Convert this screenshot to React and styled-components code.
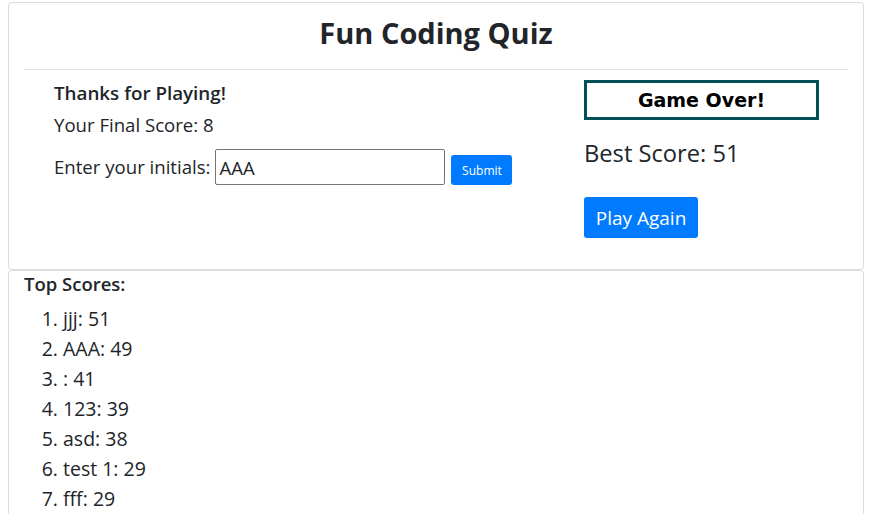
import React, { useState } from 'react'
import styled, { createGlobalStyle } from 'styled-components'

const scores = [
  { name: 'jjj', score: 51 },
  { name: 'AAA', score: 49 },
  { name: '', score: 41 },
  { name: '123', score: 39 },
  { name: 'asd', score: 38 },
  { name: 'test 1', score: 29 },
  { name: 'fff', score: 29 },
]

const App = () => {
  const [initials, setInitials] = useState('AAA')
  return (
    <>
      <GlobalStyle />
      <Page>
        <Card>
          <Title>Fun Coding Quiz</Title>
          <Divider />
          <Row>
            <LeftCol>
              <Thanks>Thanks for Playing!</Thanks>
              <Line>Your Final Score: 8</Line>
              <Form onSubmit={(e) => e.preventDefault()}>
                <Line as='label'>Enter your initials:</Line>
                <Input value={initials} onChange={(e) => setInitials(e.target.value)} />
                <SmallButton type='submit'>Submit</SmallButton>
              </Form>
            </LeftCol>
            <RightCol>
              <GameOver>Game Over!</GameOver>
              <Best>Best Score: 51</Best>
              <BigButton>Play Again</BigButton>
            </RightCol>
          </Row>
        </Card>
        <ScoreCard>
          <ScoreTitle>Top Scores:</ScoreTitle>
          <ScoreList>
            {scores.map((s, i) => (
              <ScoreItem key={i}>{s.name}: {s.score}</ScoreItem>
            ))}
          </ScoreList>
        </ScoreCard>
      </Page>
    </>
  )
}

const GlobalStyle = createGlobalStyle`
  *, *::before, *::after {
    box-sizing: border-box;
  }
  body {
    margin: 0;
    font-family: 'Open Sans', 'Noto Sans', sans-serif;
    color: #212529;
    background: #fff;
    overflow: hidden;
  }
`

const Page = styled.div`
  margin: 2px 16px 0 8px;
`

const Card = styled.div`
  border: 1px solid #dcdcdc;
  border-radius: 4px;
  padding: 0 15px;
  height: 268px;
`

const Title = styled.h1`
  margin: 0;
  padding-top: 12px;
  height: 53px;
  text-align: center;
  font-size: 29px;
  font-weight: 700;
  line-height: 36px;
`

const Divider = styled.hr`
  margin: 13px 0 0;
  border: 0;
  border-top: 1px solid #e2e2e2;
`

const Row = styled.div`
  display: flex;
`

const LeftCol = styled.div`
  width: 560px;
  padding-left: 30px;
  padding-top: 10px;
`

const RightCol = styled.div`
  display: flex;
  flex-direction: column;
  align-items: flex-start;
  padding-top: 10px;
`

const Thanks = styled.div`
  font-size: 18.8px;
  font-weight: 600;
  line-height: 26px;
`

const Line = styled.div`
  font-size: 18.6px;
  line-height: 26px;
  margin-top: 6px;
`

const Form = styled.form`
  display: flex;
  align-items: flex-end;
  margin-top: 11px;
  ${Line} {
    margin: 0 5px 5px 0;
  }
`

const Input = styled.input`
  width: 230px;
  height: 36px;
  border: 1px solid #767676;
  border-radius: 2px;
  padding: 0 3px;
  font-family: inherit;
  font-size: 18.6px;
  color: #212529;
  outline: none;
`

const SmallButton = styled.button`
  margin-left: 6px;
  height: 30px;
  width: 61px;
  padding: 0;
  border: none;
  border-radius: 3px;
  background: #007bff;
  color: #fff;
  font-family: inherit;
  font-size: 12px;
`

const GameOver = styled.div`
  width: 235px;
  height: 40px;
  border: 3px solid #014f57;
  display: flex;
  align-items: center;
  justify-content: center;
  font-family: 'DejaVu Sans', Verdana, sans-serif;
  font-weight: 700;
  font-size: 19px;
  color: #000;
`

const Best = styled.div`
  font-size: 23.7px;
  line-height: 30px;
  margin-top: 18px;
`

const BigButton = styled.button`
  margin-top: 29px;
  height: 41px;
  width: 114px;
  padding: 0;
  border: none;
  border-radius: 3px;
  background: #007bff;
  color: #fff;
  font-family: inherit;
  font-size: 19px;
`

const ScoreCard = styled.div`
  border: 1px solid #dcdcdc;
  border-bottom: none;
  border-radius: 4px 4px 0 0;
  padding: 0 15px;
`

const ScoreTitle = styled.div`
  font-size: 18.5px;
  font-weight: 600;
  line-height: 26px;
`

const ScoreList = styled.ol`
  margin: 7px 0 0;
  padding-left: 39px;
`

const ScoreItem = styled.li`
  font-size: 19.5px;
  line-height: 30px;
`

export default App
